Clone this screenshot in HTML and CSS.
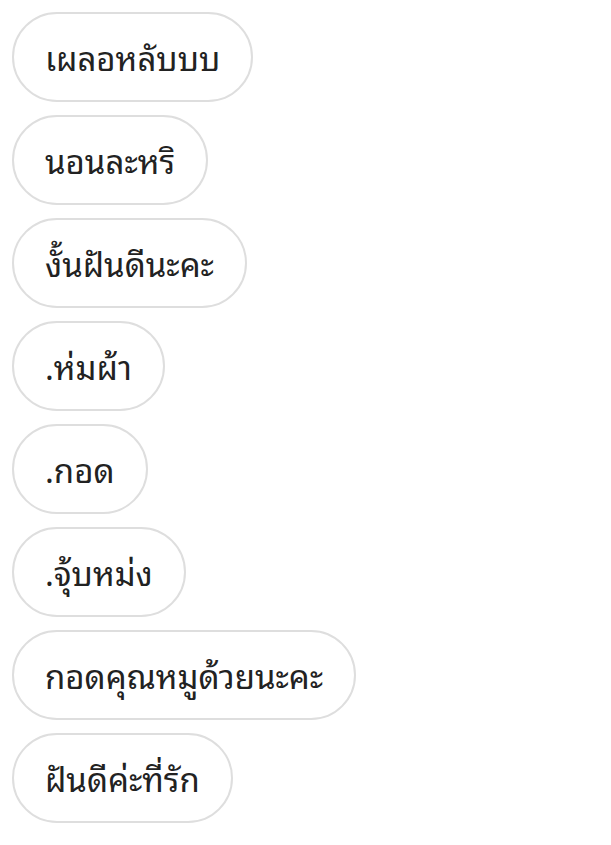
FILE: index.html
```html
<!DOCTYPE html>
<html>
<head>
  <meta charset="utf-8">
  <title>Replies</title>
  <link rel="stylesheet" href="styles.css">
</head>
<body>
  <div class="replies">
    <div class="bubble">เผลอหลับบบ</div>
    <div class="bubble">นอนละหริ</div>
    <div class="bubble">งั้นฝันดีนะคะ</div>
    <div class="bubble">.ห่มผ้า</div>
    <div class="bubble">.กอด</div>
    <div class="bubble">.จุ้บหม่ง</div>
    <div class="bubble">กอดคุณหมูด้วยนะคะ</div>
    <div class="bubble">ฝันดีค่ะที่รัก</div>
  </div>
</body>
</html>
```

FILE: styles.css
```css
body {
  margin: 0;
  background: #fff;
  font-family: "Noto Sans Thai Looped", "Noto Sans Thai", "Noto Sans", sans-serif;
}
.replies {
  display: flex;
  flex-direction: column;
  align-items: flex-start;
  gap: 13px;
  padding: 12px;
}
.bubble {
  box-sizing: border-box;
  height: 90px;
  line-height: 86px;
  padding: 0 31px;
  border: 2px solid #dedede;
  border-radius: 45px;
  font-size: 33px;
  color: #222;
  white-space: nowrap;
}
```
